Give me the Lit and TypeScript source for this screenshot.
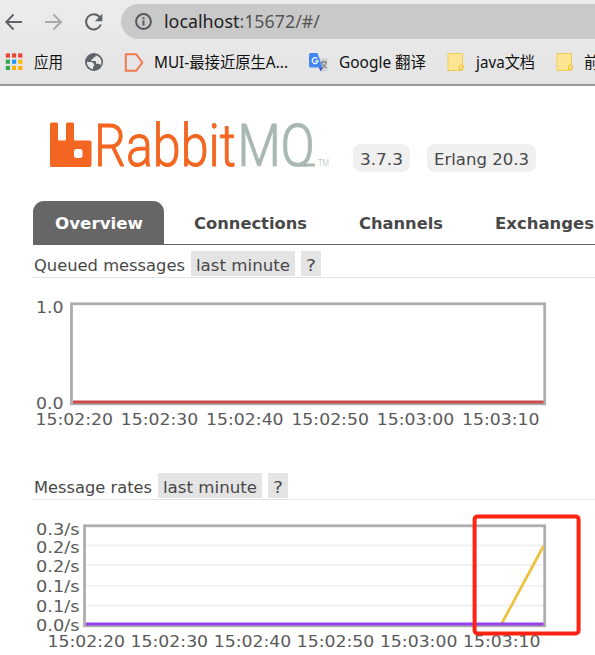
import { LitElement, html, svg, css } from "lit";
import { customElement, property } from "lit/decorators.js";

// One line of text set to an exact advance width.
const fit = (text: string, width: number, cls = "", base = 17) => html`
  <svg class="fit ${cls}" width=${width} height="24" viewBox="0 0 ${width} 24">
    <text x="0" y=${base} textLength=${width} lengthAdjust="spacingAndGlyphs">${text}</text>
  </svg>`;

const folder = html`<svg width="18" height="20" viewBox="0 0 18 20">
  <path d="M1 1.500h14.500v11.200c1.500.4 1.500 5.300-.5 5.800H1z" fill="#ffe591" stroke="#f0cb58"/>
  <path d="M12.500 18.300v-4c0-2 3.300-2 3.300 0s-.8 3.700-3 4z" fill="#ffe07a" stroke="#e9bd3c" stroke-width=".9"/>
</svg>`;

@customElement("browser-bar")
export class BrowserBar extends LitElement {
  static styles = css`
    :host { display: block; height: 84px; border-bottom: 2px solid #999; background: linear-gradient(#ececec, #e4e4e4); overflow: hidden; }
    svg { display: block; flex: none; overflow: visible; }
    .nav { display: flex; align-items: center; height: 35px; padding: 4px 0 3px 5px; }
    .fwd { margin-left: 22px; }
    .reload { margin-left: 23px; }
    .address { flex: 1; display: flex; align-items: center; height: 35px; margin-left: 18px; padding-left: 14px; border-radius: 18px 0 0 18px; background: #c9c9c9; }
    .host { margin-left: 12px; }
    .fit { font-family: "Noto Sans", "Noto Sans CJK SC", sans-serif; font-size: 15.500px; fill: #111; }
    .url { font-size: 18.500px; fill: #222; }
    .muted { fill: #555; }
    .marks { display: flex; align-items: center; height: 40px; width: 640px; padding-left: 5px; }
    .marks > * { margin-right: var(--g, 0); }
    .g10 { --g: 10px; } .g11 { --g: 11px; } .g21 { --g: 21px; } .g22 { --g: 22px; }
  `;
  render() {
    const colors = ["#ea4335", "#ea4335", "#ea4335", "#34a853", "#2196f3", "#fbbc05", "#34a853", "#fbb005", "#fbb005"];
    return html`
      <div class="nav">
        <svg width="17" height="18" viewBox="0 0 17 18"><path d="M17 9H1.500M8.500 1.500L1.300 9l7.200 7.500" fill="none" stroke="#5f6368" stroke-width="1.900"/></svg>
        <svg class="fwd" width="18" height="18" viewBox="0 0 18 18"><path d="M1 9h15.500M9.500 1.500L17 9l-7.500 7.500" fill="none" stroke="#aaa" stroke-width="1.900"/></svg>
        <svg class="reload" width="18" height="18" viewBox="0 0 18 18"><path d="M15.800 11.500A7.600 7.600 0 1 1 14.600 4" fill="none" stroke="#5f6368" stroke-width="2"/><path d="M17.300.8v7.400H9.900z" fill="#5f6368"/></svg>
        <div class="address">
          <svg width="17" height="17" viewBox="0 0 17 17"><circle cx="8.500" cy="8.500" r="7.400" fill="none" stroke="#55585c" stroke-width="2"/><path d="M8.500 7.500v5M8.500 4.300v2" stroke="#55585c" stroke-width="2"/></svg>
          <svg class="fit url host" width="156" height="24"><text y="18" textLength="156" lengthAdjust="spacingAndGlyphs">localhost<tspan class="muted">:15672/#/</tspan></text></svg>
        </div>
      </div>
      <div class="marks">
        <svg class="g11" width="18" height="18" viewBox="0 0 18 18">${colors.map((c, i) => svg`<rect x=${0.8 + (i % 3) * 6.200} y=${0.400 + Math.floor(i / 3) * 6.200} width="4.200" height="4.200" fill=${c}/>`)}</svg>
        ${fit("应用", 29, "g22", 18)}
        <svg class="g21" width="18" height="18" viewBox="0 0 18 18"><circle cx="9" cy="9" r="9" fill="#5f6368"/><path d="M10.800 2.200c0 1.800-.8 2.300-2.600 2.300v1.800H6.400v1.800h4.500v2.700h2.700c1.200 0 1.700.7 1.900 1.700 1.700-2.700 1.500-8.300-4.700-10.300z" fill="#e8e8e8"/><path d="M2 8.300l4.300 4.200v1.200c0 .8.700 1.300 1.700 1.500v.9C4.300 15.600 1.600 12.500 2 8.300z" fill="#e8e8e8"/><path d="M2.200 9h4.600l2.300 2v2.400H8v2H6.500z" fill="#e8e8e8"/></svg>
        <svg class="g11" width="19" height="19" viewBox="0 0 19 19"><path d="M1.800 1.200h10.400L18.300 9.500l-6.100 8.300H1.800z" fill="none" stroke="#f27850" stroke-width="2"/></svg>
        ${fit("MUI-最接近原生A...", 134, "g21", 18)}
        <svg class="g11" width="19" height="19" viewBox="0 0 19 19"><path d="M8 5h10.500v13.500H12z" fill="#d7d7d7"/><path d="M12 9h6m-3-1.500V9m-2.200 0c.6 3 2.500 5 5 6m-.6-6c-.5 3-2 5-4.500 6.500" fill="none" stroke="#777" stroke-width="1.100"/><path d="M1.500 0H8.500l5 14.500H1.500Q0 14.500 0 13V1.500Q0 0 1.500 0z" fill="#4285f4"/><path d="M9.500 14.500h4.200L12 18.600z" fill="#3b4fc0"/><path d="M8.200 5.600A2.900 2.900 0 1 0 9 7.800H6.300" fill="none" stroke="#fff" stroke-width="1.300"/></svg>
        ${fit("Google 翻译", 87, "g21", 18)}
        <span class="g11">${folder}</span>
        ${fit("java文档", 59, "g21", 18)}
        <span class="g10">${folder}</span>
        ${fit("前端", 30, "", 18)}
      </div>`;
  }
}

@customElement("rate-chart")
export class RateChart extends LitElement {
  @property({ type: Number }) left = 70;
  @property({ attribute: false }) ticks: [string, number][] = [];
  @property({ attribute: false }) grid: number[] = [];
  @property({ type: Number }) start = 36;
  @property({ type: Number }) pitch = 85.3;
  @property() line = "";
  @property({ type: Boolean }) marked = false;
  static styles = css`
    :host { display: block; }
    svg { display: block; overflow: visible; }
    text { font: 16px "DejaVu Sans", Verdana, sans-serif; fill: #5a5a5a; }
  `;
  render() {
    const l = this.left;
    const times = ["15:02:20", "15:02:30", "15:02:40", "15:02:50", "15:03:00", "15:03:10"];
    return html`<svg width="595" height="130" viewBox="0 0 595 130">
      ${this.grid.map((y) => svg`<path d="M${l + 2} ${y}H544" stroke="#f2f2f2" stroke-width="2"/>`)}
      <rect x=${l + 1.500} y="3.800" width=${473.200 - (l - 70)} height="100" fill="none" stroke="#adadad" stroke-width="2.800"/>
      ${this.marked ? svg`<path d="M502 101L543.500 24" stroke="#edc240" stroke-width="2.800"/>` : ""}
      <path d="M${l + 3} 102H543.500" stroke=${this.line} stroke-width="3"/>
      ${this.ticks.map(([t, y]) => svg`<text x="36" y=${y} textLength=${t.length > 3 ? 43.500 : 27.500} lengthAdjust="spacingAndGlyphs">${t}</text>`)}
      ${times.map((t, i) => svg`<text x=${this.start + i * this.pitch} y="124.500" textLength="77.500" lengthAdjust="spacingAndGlyphs">${t}</text>`)}
      ${this.marked ? svg`<rect x="474.600" y="-5.600" width="104" height="117" rx="3" fill="none" stroke="#ff2314" stroke-width="4"/>` : ""}
    </svg>`;
  }
}

@customElement("app-root")
export class AppRoot extends LitElement {
  static styles = css`
    :host { display: block; width: 595px; height: 655px; overflow: hidden; background: #fff; font-family: "DejaVu Sans", Verdana, sans-serif; }
    svg { display: block; flex: none; overflow: visible; }
    .fit { font-size: 16px; fill: #484848; }
    .header { display: flex; height: 115px; padding-left: 49px; }
    .brand { font-family: "Roboto", "Liberation Sans", sans-serif; font-weight: 300; font-size: 60px; }
    .orange { fill: #f36621; } .grey { fill: #a9b8b2; }
    .word { stroke: #f36621; stroke-width: 1; }
    .mq { stroke: #a9b8b2; stroke-width: 1.200; }
    .tm { font-size: 9px; }
    .tag { height: 28px; margin-top: 58px; padding: 0 7px; border-radius: 8px; background: #f0f0f0; box-sizing: border-box; }
    .version { width: 57px; margin-left: 20px; }
    .erlang { width: 109px; margin-left: 17px; }
    .tabs { display: flex; width: 640px; height: 43px; margin-left: 33px; border-bottom: 1px solid #666; }
    .tab { padding: 11px 0 0; height: 32px; margin-right: 52px; }
    .active { width: 131px; padding-left: 22px; margin-right: 30px; box-sizing: border-box; height: 43px; border-radius: 11px 11px 0 0; background: #666; }
    .bold { font-weight: bold; }
    .active .fit { fill: #fff; }
    .title { display: flex; height: 26px; margin: 6px 0 0 33px; border-bottom: 1px solid #e4e4e4; padding-left: 1px; }
    .title > svg { margin-top: 3px; }
    .chip { height: 25px; box-sizing: border-box; padding: 3px 5px 0; margin-left: 6px; background: #e4e4e4; }
    .chart { height: 169px; margin-top: 20px; }
    .chart rate-chart { padding-top: 2px; }
  `;
  private heading(text: string, width: number) {
    return html`<div class="title">${fit(text, width)}
      <div class="chip">${fit("last minute", 94)}</div>
      <div class="chip">${fit("?", 10)}</div></div>`;
  }
  render() {
    return html`
      <browser-bar></browser-bar>
      <div class="header">
        <svg class="brand" width="284" height="90" viewBox="49 86 284 90">
          <defs><clipPath id="letters"><rect x="236" y="110" width="82" height="56.500"/></clipPath></defs>
          <path class="orange" d="M51.500 122.500h5q1.500 0 1.500 1.500v15q0 1.500 1.500 1.500h5q1.500 0 1.500-1.500v-15q0-1.500 1.500-1.500h5q1.500 0 1.500 1.500v15q0 1.500 1.500 1.500h14q2 0 2 2V165q0 2-2 2H51.500q-1.500 0-1.500-1.500V124q0-1.500 1.500-1.500z"/>
          <rect x="74" y="149" width="8.500" height="9" rx="2.500" fill="#fff"/>
          <text class="orange word" x="94" y="166" textLength="142" lengthAdjust="spacingAndGlyphs">Rabbit</text>
          <g clip-path="url(#letters)"><text class="grey mq" x="237.500" y="166" textLength="77" lengthAdjust="spacingAndGlyphs">MQ</text></g>
          <path d="M295 165h20" fill="none" stroke="#a9b8b2" stroke-width="3"/>
          <text class="grey tm" x="318" y="165.500" textLength="11" lengthAdjust="spacingAndGlyphs">TM</text>
        </svg>
        <div class="tag version">${fit("3.7.3", 43, "", 21)}</div>
        <div class="tag erlang">${fit("Erlang 20.3", 95, "", 21)}</div>
      </div>
      <div class="tabs">
        <div class="tab active">${fit("Overview", 88, "bold")}</div>
        <div class="tab">${fit("Connections", 113, "bold")}</div>
        <div class="tab">${fit("Channels", 84, "bold")}</div>
        <div class="tab">${fit("Exchanges", 99, "bold")}</div>
      </div>
      ${this.heading("Queued messages", 151)}
      <div class="chart"><rate-chart .ticks=${[["1.0", 13], ["0.0", 109]]} line="#cb4b4b" start="35.500"></rate-chart></div>
      ${this.heading("Message rates", 118)}
      <div class="chart"><rate-chart marked left="83" start="47.500" pitch="83.100" line="#9440ed"
        .grid=${[23.5, 43, 64, 83.5]}
        .ticks=${[["0.3/s", 13], ["0.2/s", 31], ["0.2/s", 50], ["0.1/s", 70], ["0.1/s", 90], ["0.0/s", 109]]}></rate-chart></div>`;
  }
}
